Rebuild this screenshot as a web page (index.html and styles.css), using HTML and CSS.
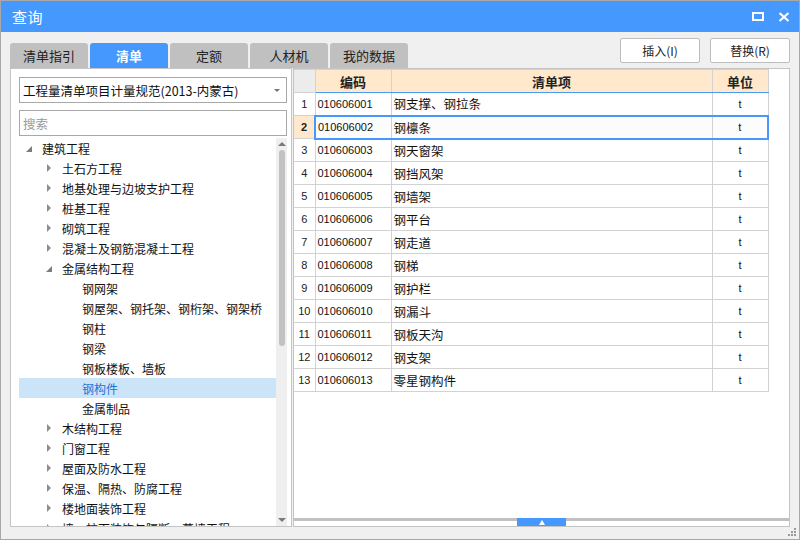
FILE: index.html
```html
<!DOCTYPE html>
<html lang="zh">
<head>
<meta charset="utf-8">
<title>查询</title>
<link rel="stylesheet" href="styles.css">
</head>
<body>
<div class="window">
  <div class="titlebar">
    <span class="title">查询</span>
    <div class="winctrls">
      <svg class="ico" width="12" height="10" viewBox="0 0 12 10"><rect x="1" y="1" width="10" height="7" fill="none" stroke="#fff" stroke-width="2"/></svg>
      <svg class="ico" width="12" height="10" viewBox="0 0 12 10"><path d="M1.5 1 L10.5 9 M10.5 1 L1.5 9" stroke="#fff" stroke-width="2.2"/></svg>
    </div>
  </div>
  <div class="toolbar">
    <div class="tabs">
      <div class="tab">清单指引</div>
      <div class="tab active">清单</div>
      <div class="tab">定额</div>
      <div class="tab">人材机</div>
      <div class="tab">我的数据</div>
    </div>
    <div class="buttons">
      <button class="btn">插入(I)</button>
      <button class="btn">替换(R)</button>
    </div>
  </div>
  <div class="panels">
    <div class="left">
      <div class="select"><span>工程量清单项目计量规范(2013-内蒙古)</span><i class="sel-arrow"></i></div>
      <div class="search">搜索</div>
      <div class="treewrap">
        <div class="tree">
          <div class="node l0"><span class="tw"><i class="open"></i></span>建筑工程</div>
          <div class="node l1"><span class="tw"><i class="closed"></i></span>土石方工程</div>
          <div class="node l1"><span class="tw"><i class="closed"></i></span>地基处理与边坡支护工程</div>
          <div class="node l1"><span class="tw"><i class="closed"></i></span>桩基工程</div>
          <div class="node l1"><span class="tw"><i class="closed"></i></span>砌筑工程</div>
          <div class="node l1"><span class="tw"><i class="closed"></i></span>混凝土及钢筋混凝土工程</div>
          <div class="node l1"><span class="tw"><i class="open"></i></span>金属结构工程</div>
          <div class="node l2"><span class="tw"></span>钢网架</div>
          <div class="node l2"><span class="tw"></span>钢屋架、钢托架、钢桁架、钢架桥</div>
          <div class="node l2"><span class="tw"></span>钢柱</div>
          <div class="node l2"><span class="tw"></span>钢梁</div>
          <div class="node l2"><span class="tw"></span>钢板楼板、墙板</div>
          <div class="node l2 sel"><span class="tw"></span>钢构件</div>
          <div class="node l2"><span class="tw"></span>金属制品</div>
          <div class="node l1"><span class="tw"><i class="closed"></i></span>木结构工程</div>
          <div class="node l1"><span class="tw"><i class="closed"></i></span>门窗工程</div>
          <div class="node l1"><span class="tw"><i class="closed"></i></span>屋面及防水工程</div>
          <div class="node l1"><span class="tw"><i class="closed"></i></span>保温、隔热、防腐工程</div>
          <div class="node l1"><span class="tw"><i class="closed"></i></span>楼地面装饰工程</div>
          <div class="node l1"><span class="tw"><i class="closed"></i></span>墙、柱面装饰与隔断、幕墙工程</div>
        </div>
        <div class="vscroll">
          <i class="up"></i>
          <div class="thumb"></div>
          <div class="vspace"></div>
          <i class="down"></i>
        </div>
      </div>
    </div>
    <div class="right">
      <div class="grid">
        <table>
          <colgroup><col class="c0"><col class="c1"><col class="c2"><col class="c3"></colgroup>
          <thead>
            <tr><th class="corner"></th><th>编码</th><th>清单项</th><th>单位</th></tr>
          </thead>
          <tbody>
            <tr><td class="rn">1</td><td class="code">010606001</td><td>钢支撑、钢拉条</td><td class="unit">t</td></tr>
            <tr class="cur"><td class="rn">2</td><td class="code">010606002</td><td>钢檩条</td><td class="unit">t</td></tr>
            <tr><td class="rn">3</td><td class="code">010606003</td><td>钢天窗架</td><td class="unit">t</td></tr>
            <tr><td class="rn">4</td><td class="code">010606004</td><td>钢挡风架</td><td class="unit">t</td></tr>
            <tr><td class="rn">5</td><td class="code">010606005</td><td>钢墙架</td><td class="unit">t</td></tr>
            <tr><td class="rn">6</td><td class="code">010606006</td><td>钢平台</td><td class="unit">t</td></tr>
            <tr><td class="rn">7</td><td class="code">010606007</td><td>钢走道</td><td class="unit">t</td></tr>
            <tr><td class="rn">8</td><td class="code">010606008</td><td>钢梯</td><td class="unit">t</td></tr>
            <tr><td class="rn">9</td><td class="code">010606009</td><td>钢护栏</td><td class="unit">t</td></tr>
            <tr><td class="rn">10</td><td class="code">010606010</td><td>钢漏斗</td><td class="unit">t</td></tr>
            <tr><td class="rn">11</td><td class="code">010606011</td><td>钢板天沟</td><td class="unit">t</td></tr>
            <tr><td class="rn">12</td><td class="code">010606012</td><td>钢支架</td><td class="unit">t</td></tr>
            <tr><td class="rn">13</td><td class="code">010606013</td><td>零星钢构件</td><td class="unit">t</td></tr>
          </tbody>
        </table>
      </div>
      <div class="splitter"><div class="handle"><i></i></div></div>
    </div>
  </div>
  <div class="statusbar">
    <svg class="grip" width="9" height="9" viewBox="0 0 9 9" fill="#9a9a9a">
      <rect x="6" y="0" width="2" height="2"/>
      <rect x="3" y="3" width="2" height="2"/><rect x="6" y="3" width="2" height="2"/>
      <rect x="0" y="6" width="2" height="2"/><rect x="3" y="6" width="2" height="2"/><rect x="6" y="6" width="2" height="2"/>
    </svg>
  </div>
</div>
</body>
</html>
```

FILE: styles.css
```css
* { box-sizing: border-box; }
html, body { margin: 0; padding: 0; }
body {
  width: 800px; height: 540px; overflow: hidden;
  font-family: "Noto Sans CJK SC", "Liberation Sans", sans-serif;
  font-size: 12px; color: #111;
}
.window {
  width: 800px; height: 540px;
  border: 1px solid #a8a8a8;
  background: #f0f0f0;
  display: flex; flex-direction: column;
}
.titlebar {
  height: 31px; flex: none;
  background: #4599fe;
  display: flex; align-items: center; justify-content: space-between;
  padding: 0 9px 0 11px;
}
.title { color: #fff; font-size: 15px; letter-spacing: 0.5px; }
.winctrls { display: flex; gap: 14px; align-items: center; }
.ico { display: block; }

.toolbar {
  height: 36px; flex: none;
  display: flex; justify-content: space-between;
  padding: 0 9px 0 9px;
}
.tabs { display: flex; gap: 2px; align-self: flex-end; }
.tab {
  width: 78px; height: 25px;
  background: #c0c0c0;
  border-radius: 3px 3px 0 0;
  display: flex; align-items: center; justify-content: center;
  font-size: 13px; color: #222;
}
.tab.active { background: #4599fe; color: #fff; font-weight: bold; }
.buttons { display: flex; gap: 10px; padding-top: 6px; }
.btn {
  width: 80px; height: 25px;
  background: #fff; border: 1px solid #bdbdbd; border-radius: 2px;
  font-family: inherit; font-size: 12px; color: #222;
  padding: 0;
}

.panels { height: 459px; flex: none; display: flex; padding-left: 9px; gap: 1px; }
.left {
  width: 282px; height: 459px;
  background: #fff;
  border: 1px solid #c4c4c4;
  padding: 8px 4px 0 8px;
  display: flex; flex-direction: column;
}
.select {
  height: 26px; border: 1px solid #a8a8a8;
  display: flex; align-items: center; justify-content: space-between;
  padding: 0 6px 0 3px; font-size: 12.5px; color: #111;
}
.sel-arrow {
  width: 0; height: 0;
  border-left: 3px solid transparent; border-right: 3px solid transparent;
  border-top: 3px solid #777;
}
.search {
  height: 26px; margin-top: 7px; border: 1px solid #a8a8a8;
  display: flex; align-items: center; padding-left: 3px;
  color: #999; font-size: 12.5px;
}
.treewrap { flex: 1; display: flex; margin-top: 2px; overflow: hidden; min-height: 0; }
.tree { flex: 1; overflow: hidden; }
.node { height: 20px; display: flex; align-items: center; white-space: nowrap; color: #111; }
.node.l1 { padding-left: 20px; }
.node.l2 { padding-left: 40px; }
.node.sel { background: #cce4f7; color: #1a73d9; }
.tw { width: 23px; flex: none; display: flex; align-items: center; padding-left: 7px; height: 20px; }
.tw .closed {
  width: 0; height: 0;
  border-top: 4px solid transparent; border-bottom: 4px solid transparent;
  border-left: 4px solid #8c8c8c;
  margin-left: 1px;
}
.tw .open {
  width: 0; height: 0;
  border-left: 6px solid transparent;
  border-bottom: 6px solid #7c7c7c;
  margin-top: 2px;
}
.vscroll {
  width: 11px; flex: none; background: #efefef;
  display: flex; flex-direction: column; align-items: center;
  padding: 4px 0 4px;
}
.vscroll .up, .vscroll .down {
  width: 0; height: 0;
  border-left: 4px solid transparent; border-right: 4px solid transparent;
}
.vscroll .up { border-bottom: 4px solid #7a7a7a; }
.vscroll .down { border-top: 4px solid #7a7a7a; }
.thumb { width: 6px; height: 196px; margin-top: 4px; background: #c2c2c2; border-radius: 3px; }
.vspace { flex: 1; }

.right {
  width: 497px; height: 459px;
  background: #fff;
  border: 1px solid #c4c4c4;
  display: flex; flex-direction: column;
}
.grid { flex: 1; overflow: hidden; }
table { border-collapse: collapse; table-layout: fixed; width: 474px; }
col.c0 { width: 21px; }
col.c1 { width: 76px; }
col.c2 { width: 321px; }
col.c3 { width: 56px; }
th, td { border: 1px solid #d2d2d2; height: 23px; padding: 0; white-space: nowrap; overflow: hidden; }
th:first-child, td:first-child { border-left: none; }
th {
  background: #ffe8cc; font-weight: bold; font-size: 13px; color: #222;
  border-bottom: 1px solid #4a9af7;
}
th.corner { background: #ececec; border-bottom-color: #d2d2d2; }
td { font-size: 12.5px; padding-left: 2px; }
td.rn { text-align: center; padding-left: 0; font-family: "Liberation Sans", sans-serif; font-size: 11px; color: #222; }
td.code { font-family: "Liberation Sans", sans-serif; font-size: 11px; }
td.unit { text-align: center; padding-left: 0; font-family: "Liberation Sans", sans-serif; font-size: 11px; }
tr.cur td { background: #fcfcfc; border-top: 2px solid #4599fe; border-bottom: 2px solid #4599fe; }
tr.cur td.rn { background: #ffe8cc; font-weight: bold; border-top: 1px solid #d2d2d2; border-bottom: 1px solid #d2d2d2; border-right: 2px solid #4599fe; }
tr.cur td.unit { border-right: 2px solid #4599fe; }

.splitter { height: 8px; flex: none; border-top: 3px solid #c0c0c0; display: flex; justify-content: center; }
.handle {
  width: 49px; height: 8px; margin-top: -3px; margin-left: 0;
  background: #4599fe; display: flex; justify-content: center; align-items: center;
}
.handle i {
  width: 0; height: 0;
  border-left: 3px solid transparent; border-right: 3px solid transparent;
  border-bottom: 5px solid #fff;
}

.statusbar { flex: 1; display: flex; justify-content: flex-end; align-items: flex-end; padding: 0 2px 2px 0; }
.grip { display: block; }
```
